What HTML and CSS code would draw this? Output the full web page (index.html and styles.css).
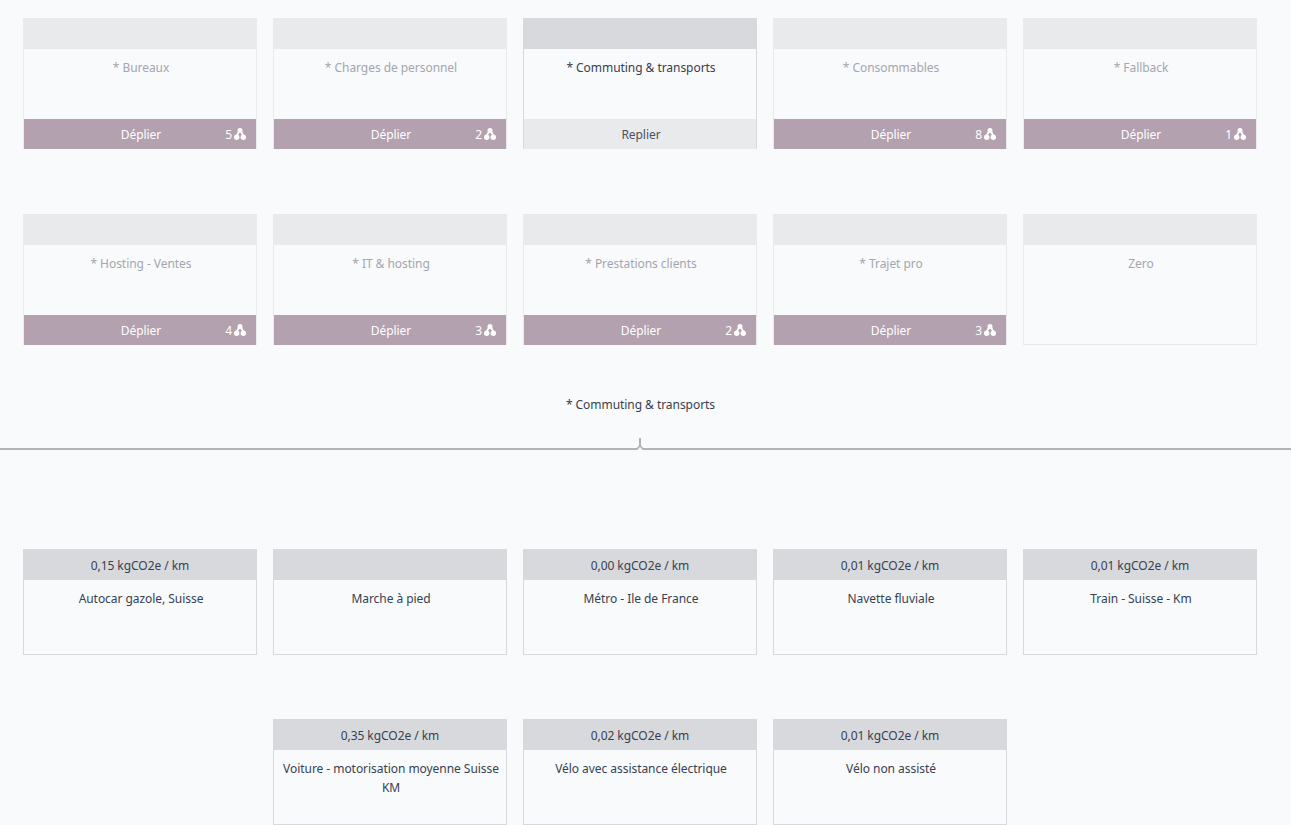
FILE: index.html
```html
<!DOCTYPE html>
<html lang="fr">
<head>
<meta charset="utf-8">
<title>Catégories</title>
<link rel="stylesheet" href="styles.css">
</head>
<body>
<svg class="defs" width="0" height="0" aria-hidden="true"><symbol id="tree" viewBox="0 0 12 12"><circle cx="6" cy="2.500" r="2.500"/><circle cx="2.700" cy="9.300" r="2.700"/><circle cx="9.300" cy="9.300" r="2.700"/><path d="M4.500 2.500 2 7h2L6 4l2 3h2L7.500 2.500z"/></symbol></svg>
<section class="parents">
  <article class="card muted"><div class="head"></div><div class="body">* Bureaux</div><div class="foot closed"><span>Déplier</span><span class="count">5<svg class="ico"><use href="#tree"/></svg></span></div></article>
  <article class="card muted"><div class="head"></div><div class="body">* Charges de personnel</div><div class="foot closed"><span>Déplier</span><span class="count">2<svg class="ico"><use href="#tree"/></svg></span></div></article>
  <article class="card active"><div class="head"></div><div class="body">* Commuting &amp; transports</div><div class="foot open"><span>Replier</span></div></article>
  <article class="card muted"><div class="head"></div><div class="body">* Consommables</div><div class="foot closed"><span>Déplier</span><span class="count">8<svg class="ico"><use href="#tree"/></svg></span></div></article>
  <article class="card muted"><div class="head"></div><div class="body">* Fallback</div><div class="foot closed"><span>Déplier</span><span class="count">1<svg class="ico"><use href="#tree"/></svg></span></div></article>
  <article class="card muted"><div class="head"></div><div class="body">* Hosting - Ventes</div><div class="foot closed"><span>Déplier</span><span class="count">4<svg class="ico"><use href="#tree"/></svg></span></div></article>
  <article class="card muted"><div class="head"></div><div class="body">* IT &amp; hosting</div><div class="foot closed"><span>Déplier</span><span class="count">3<svg class="ico"><use href="#tree"/></svg></span></div></article>
  <article class="card muted"><div class="head"></div><div class="body">* Prestations clients</div><div class="foot closed"><span>Déplier</span><span class="count">2<svg class="ico"><use href="#tree"/></svg></span></div></article>
  <article class="card muted"><div class="head"></div><div class="body">* Trajet pro</div><div class="foot closed"><span>Déplier</span><span class="count">3<svg class="ico"><use href="#tree"/></svg></span></div></article>
  <article class="card muted"><div class="head"></div><div class="body">Zero</div><div class="foot empty"></div></article>
</section>
<h2 class="title">* Commuting &amp; transports</h2>
<div class="divider"><svg class="tick" width="16" height="14" viewBox="0 0 16 14"><path class="curve" d="M0 11H4.500Q7.500 10.500 8 7V0M16 11H11.500Q8.500 10.500 8 7"/><path class="notch" d="M8 9 11 12.500H5z"/></svg></div>
<section class="children">
  <article class="card leaf"><div class="head">0,15 kgCO2e / km</div><div class="body">Autocar gazole, Suisse</div></article>
  <article class="card leaf"><div class="head"></div><div class="body">Marche à pied</div></article>
  <article class="card leaf"><div class="head">0,00 kgCO2e / km</div><div class="body">Métro - Ile de France</div></article>
  <article class="card leaf"><div class="head">0,01 kgCO2e / km</div><div class="body">Navette fluviale</div></article>
  <article class="card leaf"><div class="head">0,01 kgCO2e / km</div><div class="body">Train - Suisse - Km</div></article>
  <article class="card leaf"><div class="head">0,35 kgCO2e / km</div><div class="body">Voiture - motorisation moyenne Suisse KM</div></article>
  <article class="card leaf"><div class="head">0,02 kgCO2e / km</div><div class="body">Vélo avec assistance électrique</div></article>
  <article class="card leaf"><div class="head">0,01 kgCO2e / km</div><div class="body">Vélo non assisté</div></article>
</section>
</body>
</html>
```
FILE: styles.css
```css
* { box-sizing: border-box; }
html, body { margin: 0; height: 825px; overflow: hidden; }
body {
  background: #f9fafc;
  color: #374151;
  font: 12px/19px "Noto Sans", sans-serif;
  letter-spacing: -0.05px;
}
.defs { position: absolute; }
.parents, .children {
  display: flex;
  flex-wrap: wrap;
  justify-content: center;
  width: 1280px;
  padding: 0 23px;
}
.parents { gap: 65px 16px; padding-top: 18px; }
.children { gap: 64px 16px; padding-top: 99px; }
.card {
  width: 234px;
  display: flex;
  flex-direction: column;
  border: 1px solid #d8d9dd;
  border-top: 0;
  text-align: center;
}
.parents .card { height: 131px; }
.leaf { height: 106px; }
.muted { border-color: #e9eaec; color: #a3a6ae; }
.head {
  height: 31px;
  margin: 0 -1px;
  background: #d8d9dd;
  line-height: 34px;
  flex: none;
}
.muted .head { background: #e9eaec; }
.body { flex: 1; padding: 9px 8px 0 10px; }
.leaf .body { padding: 9px 2px 0 4px; }
.foot {
  position: relative;
  height: 30px;
  margin-bottom: -1px;
  padding-left: 2px;
  line-height: 31px;
  flex: none;
}
.closed { background: #b3a1af; color: #fff; }
.open { background: #e9eaec; color: #4b5260; }
.empty { background: transparent; }
.count {
  position: absolute;
  right: 10px;
  top: 0;
  display: flex;
  align-items: center;
  gap: 2px;
}
.ico { width: 12px; height: 12px; margin-bottom: 2px; fill: #fff; }
.title {
  margin: 0;
  padding: 50px 0 0 1px;
  font: inherit;
  letter-spacing: inherit;
  text-align: center;
  height: 78px;
  line-height: 19px;
  width: 1280px;
}
.divider {
  position: relative;
  height: 2px;
  margin-top: 25px;
  background: #b2b3b7;
}
.tick {
  position: absolute;
  left: 632px;
  top: -10px;
}
.notch { fill: #f9fafc; }
.curve { fill: none; stroke: #b2b3b7; stroke-width: 2; }
```
